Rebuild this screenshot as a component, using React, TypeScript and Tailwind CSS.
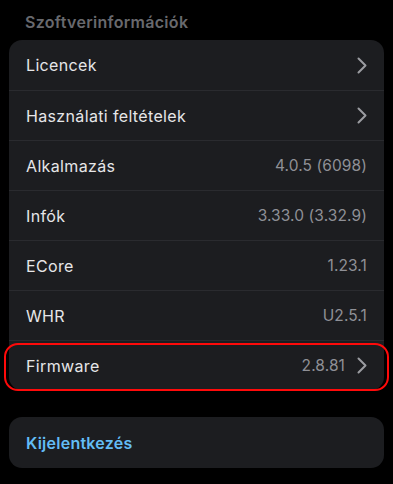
import React from "react";

const Chevron = () => (
  <svg width="10" height="17" viewBox="0 0 10 17" fill="none" className="shrink-0">
    <path d="M1.5 1.5 L8.5 8.5 L1.5 15.5" stroke="#9b9ca1" strokeWidth="2" strokeLinecap="round" strokeLinejoin="round" />
  </svg>
);

type Row = { label: string; value?: string; chevron?: boolean; highlight?: boolean };

const rows: Row[] = [
  { label: "Licencek", chevron: true },
  { label: "Használati feltételek", chevron: true },
  { label: "Alkalmazás", value: "4.0.5 (6098)" },
  { label: "Infók", value: "3.33.0 (3.32.9)" },
  { label: "ECore", value: "1.23.1" },
  { label: "WHR", value: "U2.5.1" },
  { label: "Firmware", value: "2.8.81", chevron: true, highlight: true },
];

export default function App() {
  return (
    <div
      className="w-[393px] h-[484px] bg-black overflow-hidden"
      style={{ fontFamily: "Inter, 'Noto Sans', sans-serif" }}
    >
      <div className="px-[25px] pt-[10px] h-[40px] text-[16px] font-semibold text-[#68696e] tracking-[0.3px]">
        Szoftverinformációk
      </div>
      <div className="mx-[9px] rounded-[13px] bg-[#1c1d20]">
        {rows.map((r, i) => (
          <div
            key={r.label}
            className={`relative h-[50px] flex items-center pl-[17px] pr-[17px] ${
              i > 0 ? "border-t border-[#2a2b2f]" : ""
            }`}
          >
            <span className="flex-1 text-[16px] text-[#e6e6e8] tracking-[0.35px]">{r.label}</span>
            {r.value && (
              <span className="text-[15.5px] text-[#8f9096] tracking-[0.1px]">{r.value}</span>
            )}
            {r.chevron && (
              <span className={r.value ? "ml-[12px]" : ""}>
                <Chevron />
              </span>
            )}
            {r.highlight && (
              <div className="absolute left-[-5px] right-[-5px] top-[2px] bottom-[-1px] rounded-[14px] border-[2.5px] border-[#ff0a0a] pointer-events-none" />
            )}
          </div>
        ))}
      </div>
      <div className="mx-[9px] mt-[27px] h-[51px] rounded-[13px] bg-[#1c1d20] flex items-center px-[17px]">
        <span className="text-[16px] font-semibold text-[#63bcf5] tracking-[0.25px]">Kijelentkezés</span>
      </div>
    </div>
  );
}
